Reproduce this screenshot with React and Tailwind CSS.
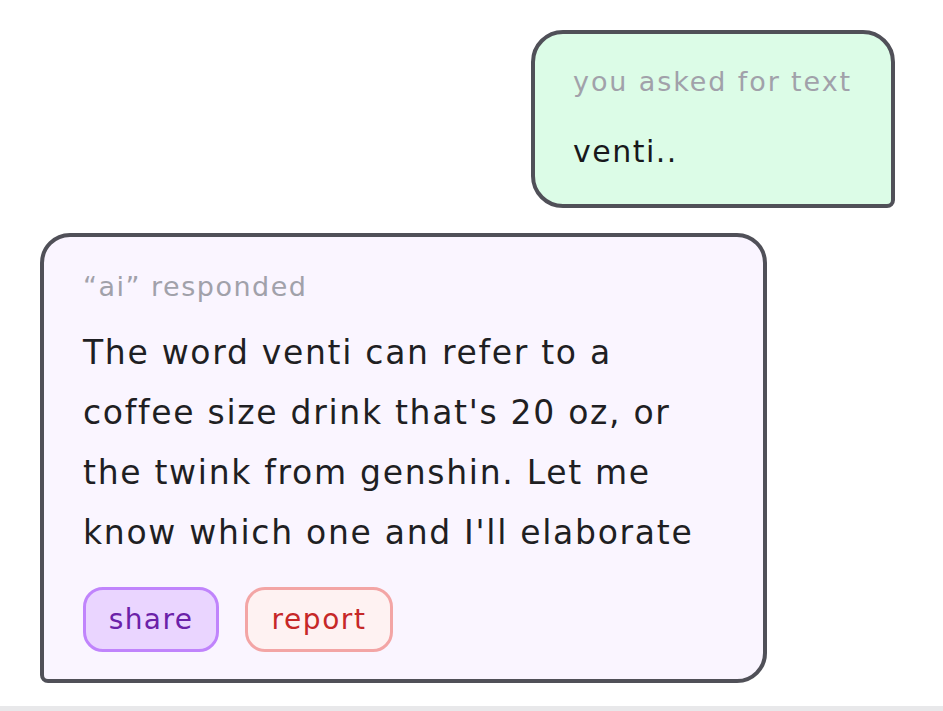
export default function App() {
  return (
    <div
      className="flex min-h-[711px] w-full flex-col bg-white"
      style={{ fontFamily: '"DejaVu Sans", "Noto Sans", sans-serif' }}
    >
      <div className="flex flex-1 flex-col pl-[40px] pr-[48px] pt-[30px]">
        <div className="flex justify-end">
          <div className="w-[364px] rounded-[32px] rounded-br-[8px] border-4 border-[#505058] bg-[#dcfce7] pb-[32px] pl-[38px] pr-[30px] pt-[28px]">
            <div className="whitespace-nowrap text-[27px] leading-[40px] tracking-[1.9px] text-[#a1a1aa]">you asked for text</div>
            <div className="mt-[30px] text-[30px] leading-[40px] tracking-[1.5px] text-[#18181b]">venti..</div>
          </div>
        </div>
        <div className="mt-[25px] flex">
          <div className="w-[727px] rounded-[30px] rounded-bl-[8px] border-4 border-[#505058] bg-[#faf5ff] px-[39px] pb-[27px] pt-[30px]">
            <div className="whitespace-nowrap text-[27px] leading-[40px] tracking-[1.5px] text-[#a1a1aa]">“ai” responded</div>
            <div className="mt-[16px] whitespace-nowrap text-[33px] leading-[60px] tracking-[1.7px] text-[#1f1f23]">
              The word venti can refer to a<br />
              coffee size drink that's 20 oz, or<br />
              the twink from genshin. Let me<br />
              know which one and I'll elaborate
            </div>
            <div className="mt-[24px] flex gap-[26px]">
              <button className="flex h-[65px] w-[136px] items-center justify-center rounded-[20px] border-[3px] border-[#c084fc] bg-[#ead5ff] text-[28px] tracking-[1.4px] text-[#6b21a8]">
                share
              </button>
              <button className="flex h-[65px] w-[148px] items-center justify-center rounded-[20px] border-[3px] border-[#f3a5a5] bg-[#fef2f2] text-[28px] tracking-[1.6px] text-[#c62828]">
                report
              </button>
            </div>
          </div>
        </div>
      </div>
      <div className="h-[5px] bg-[#e8e8ea]" />
    </div>
  );
}
